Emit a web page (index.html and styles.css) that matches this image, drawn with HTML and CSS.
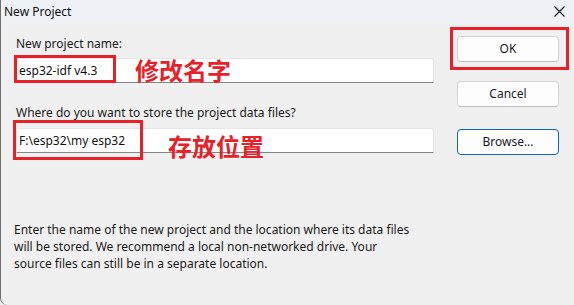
FILE: index.html
```html
<!DOCTYPE html>
<html>
<head>
<meta charset="utf-8">
<link rel="stylesheet" href="styles.css">
</head>
<body>
<div class="window">
  <div class="titlebar">
    <span class="title">New Project</span>
    <svg class="close" width="11" height="11" viewBox="0 0 11 11"><path d="M0.5 0.5 L10.5 10.5 M10.5 0.5 L0.5 10.5" stroke="#1b1b1b" stroke-width="1.1" fill="none"/></svg>
  </div>
  <div class="content">
    <div class="main">
      <div class="fields">
        <div class="label first">New project name:</div>
        <div class="input">
          <span class="value">esp32-idf v4.3</span>
          <div class="mark mark-name"></div>
          <div class="note note-name">修改名字</div>
        </div>
        <div class="label second">Where do you want to store the project data files?</div>
        <div class="input">
          <span class="value">F:\esp32\my esp32</span>
          <div class="mark mark-path"></div>
          <div class="note note-path">存放位置</div>
        </div>
      </div>
      <div class="buttons">
        <div class="btn ok">OK<div class="mark mark-ok"></div></div>
        <div class="btn cancel">Cancel</div>
        <div class="btn browse">Browse...</div>
      </div>
    </div>
    <p class="desc">Enter the name of the new project and the location where its data files<br>will be stored. We recommend a local non-networked drive. Your<br>source files can still be in a separate location.</p>
  </div>
</div>
</body>
</html>
```
FILE: styles.css
```css
html, body {
  margin: 0;
  padding: 0;
  background: #f0f0f0;
}
.window {
  width: 574px;
  height: 305px;
  display: flex;
  flex-direction: column;
  font-family: "Noto Sans", "Segoe UI", sans-serif;
  font-size: 12px;
  color: #1a1a1a;
  background: #f0f0f0;
  border-left: 1px solid #6e6e6e;
  border-bottom-left-radius: 7px;
  box-sizing: border-box;
  overflow: hidden;
}
.titlebar {
  height: 25px;
  background: #eef2f7;
  display: flex;
  align-items: center;
  justify-content: space-between;
  padding: 0 9px 0 3px;
  flex: none;
}
.title {
  font-size: 12px;
  line-height: 16px;
  color: #111;
  margin-top: -2px;
}
.close {
  display: block;
  margin-top: -2px;
}
.content {
  flex: 1;
  display: flex;
  flex-direction: column;
  padding: 0 0 0 15px;
}
.main {
  display: flex;
  gap: 23px;
}
.fields {
  width: 418px;
  display: flex;
  flex-direction: column;
}
.label {
  line-height: 16px;
  height: 16px;
}
.label.first { margin-top: 11px; }
.label.second { margin-top: 22px; }
.input {
  position: relative;
  height: 25px;
  box-sizing: border-box;
  background: #ffffff;
  border: 1px solid #e6e6e6;
  border-bottom: 1px solid #858585;
  border-radius: 3px 3px 0 0;
  margin-top: 6px;
  display: flex;
  align-items: center;
  padding-left: 2px;
}
.label.second + .input { margin-top: 7px; }
.value {
  line-height: 16px;
  color: #111;
}
.mark {
  position: absolute;
  border: 3px solid #e8202a;
  box-sizing: border-box;
}
.mark-name { left: -3px; top: -4px; width: 102px; height: 28px; }
.mark-path { left: -4px; top: -9px; width: 130px; height: 40px; }
.mark-ok { left: -8px; top: -10px; width: 119px; height: 43px; }
.note {
  position: absolute;
  font-family: "Noto Sans CJK SC", sans-serif;
  font-weight: 700;
  font-size: 24px;
  line-height: 26px;
  color: #e8202a;
  white-space: nowrap;
}
.note-name { left: 118px; top: -2px; }
.note-path { left: 151px; top: 4px; }
.buttons {
  width: 102px;
  display: flex;
  flex-direction: column;
}
.btn {
  position: relative;
  height: 26px;
  box-sizing: border-box;
  background: #fdfdfd;
  border: 1px solid #d3d3d3;
  border-bottom-color: #bdbdbd;
  border-radius: 4px;
  display: flex;
  align-items: center;
  justify-content: center;
  line-height: 16px;
  color: #1a1a1a;
}
.btn.ok { margin-top: 11px; }
.btn.cancel { margin-top: 19px; }
.btn.browse {
  margin-top: 22px;
  border: 1px solid #0a64c2;
}
.desc {
  margin: 66px 0 0 -2px;
  line-height: 17px;
  color: #1a1a1a;
}
```
